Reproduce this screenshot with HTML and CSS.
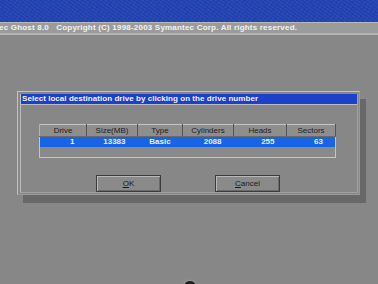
FILE: index.html
```html
<!DOCTYPE html>
<html>
<head>
<meta charset="utf-8">
<link rel="stylesheet" href="styles.css">
</head>
<body>
<div class="top"></div>
<div class="strip"><span class="strip-text">ec Ghost 8.0&nbsp;&nbsp; Copyright (C) 1998-2003 Symantec Corp. All rights reserved.</span></div>
<div class="desk">
  <div class="dialog">
    <div class="frame">
      <div class="title">Select local destination drive by clicking on the drive number</div>
      <div class="body">
        <table class="drives">
          <thead>
            <tr>
              <th class="c1">Drive</th>
              <th class="c2">Size(MB)</th>
              <th class="c3">Type</th>
              <th class="c4">Cylinders</th>
              <th class="c5">Heads</th>
              <th class="c6">Sectors</th>
            </tr>
          </thead>
          <tbody>
            <tr class="sel">
              <td class="num">1</td>
              <td class="num">13383</td>
              <td class="mid">Basic</td>
              <td class="num">2088</td>
              <td class="num">255</td>
              <td class="num">63</td>
            </tr>
            <tr class="empty"><td colspan="6"></td></tr>
          </tbody>
        </table>
        <div class="buttons">
          <div class="btn"><span class="u">O</span>K</div>
          <div class="btn"><span class="u">C</span>ancel</div>
        </div>
      </div>
    </div>
  </div>
  <div class="cursor"></div>
</div>
</body>
</html>
```

FILE: styles.css
```css
html, body {
  margin: 0;
  padding: 0;
}
body {
  width: 378px;
  height: 284px;
  overflow: hidden;
  background: #878787;
  font-family: "Liberation Sans", Arial, sans-serif;
  font-weight: bold;
  font-size: 8px;
}
.top {
  height: 22px;
  background-color: #2243b2;
  background-image:
    repeating-linear-gradient(35deg, rgba(255,255,255,0.05) 0 1px, rgba(0,0,0,0) 1px 3px),
    repeating-linear-gradient(-50deg, rgba(0,0,30,0.08) 0 1px, rgba(0,0,0,0) 1px 4px);
}
.strip {
  height: 10px;
  background: #9b9b9b;
  border-top: 1px solid #b9b9b9;
  border-bottom: 2px solid #b4b4b4;
  color: #f2f2f2;
  line-height: 10px;
  white-space: nowrap;
  overflow: hidden;
}
.strip-text {
  display: block;
  margin-left: -1px;
  letter-spacing: 0.2px;
}
.desk {
  position: relative;
  height: 249px;
  padding-top: 56px;
  box-sizing: border-box;
}
.dialog {
  margin-left: 17px;
  width: 343px;
  height: 104px;
  box-sizing: border-box;
  border: 1px solid #c2c2c2;
  border-right-color: #9a9a9a;
  border-bottom-color: #9a9a9a;
  padding: 2px 1px 1px 2px;
  background: #878787;
  box-shadow: 6px 8px 0 #686868;
}
.frame {
  height: 100%;
  box-sizing: border-box;
  border-left: 1px solid #bdbdbd;
  border-right: 1px solid #a0a0a0;
  border-bottom: 1px solid #a0a0a0;
}
.title {
  height: 10px;
  line-height: 10px;
  background: #1c3fcc;
  color: #f4f4f4;
  padding-left: 1px;
  border-bottom: 1px solid #bcbcbc;
  white-space: nowrap;
  letter-spacing: 0.05px;
}
.body {
  padding: 19px 0 0 18px;
}
.drives {
  border-collapse: collapse;
  width: 297px;
  table-layout: fixed;
  border: 1px solid #c6c6c6;
  color: #1a1a1a;
}
.drives th {
  height: 11px;
  padding: 0;
  font-weight: normal;
  line-height: 11px;
  text-align: center;
  background: #8e8e8e;
  border-left: 1px solid #b4b4b4;
  border-right: 1px solid #555555;
  border-bottom: 1px solid #6a6a6a;
  color: #1c1c1c;
}
.c1 { width: 46px; }
.c2 { width: 50px; }
.c3 { width: 44px; }
.c4 { width: 50px; }
.c5 { width: 52px; }
.c6 { width: 48px; }
.sel td {
  height: 10px;
  padding: 0;
  line-height: 10px;
  background: #1765e6;
  color: #e8f0ff;
}
.num {
  text-align: right;
  padding-right: 12px !important;
}
.mid {
  text-align: center;
}
.empty td {
  height: 10px;
  padding: 0;
  background: #8a8a8a;
}
.buttons {
  display: flex;
  gap: 54px;
  margin: 17px 0 0 57px;
}
.btn {
  width: 65px;
  height: 17px;
  box-sizing: border-box;
  border: 1px solid #3c3c3c;
  box-shadow: inset 1px 1px 0 #b8b8b8, inset -1px -1px 0 #6a6a6a;
  background: #8a8a8a;
  color: #1a1a1a;
  text-align: center;
  line-height: 15px;
  font-weight: normal;
}
.u {
  text-decoration: underline;
}
.cursor {
  position: absolute;
  left: 185px;
  top: 246px;
  width: 10px;
  height: 6px;
  border-radius: 50%;
  background: #1e1e1e;
  box-shadow: 0 0 2px 1px #9a9a9a;
}
```
